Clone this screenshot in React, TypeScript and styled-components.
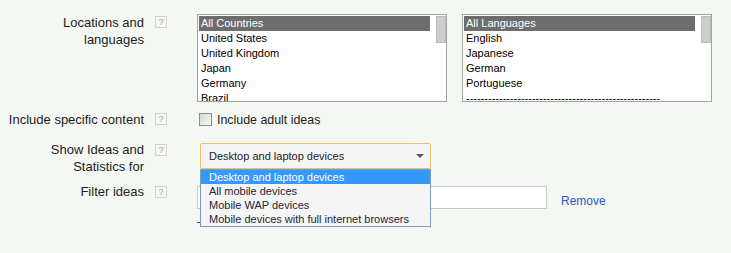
import React from "react";
import styled, { createGlobalStyle } from "styled-components";

const GlobalStyle = createGlobalStyle`
  html, body {
    margin: 0;
    padding: 0;
    background: #f4f8f3;
  }
  body {
    font-family: "Liberation Sans", Arial, sans-serif;
    color: #1c1c1c;
  }
`;

const Page = styled.div`
  width: 731px;
  height: 253px;
  padding-top: 14px;
  box-sizing: border-box;
  overflow: hidden;
`;

const Row = styled.div<{ $gap: number }>`
  display: grid;
  grid-template-columns: 145px 12px 1fr;
  column-gap: 10px;
  align-items: start;
  margin-top: ${(p) => p.$gap}px;
`;

const Label = styled.div`
  text-align: right;
  font-size: 13px;
  line-height: 17px;
  padding-right: 1px;
`;

const Help = styled.span<{ $top: number }>`
  display: flex;
  align-items: center;
  justify-content: center;
  width: 12px;
  height: 12px;
  box-sizing: border-box;
  margin-top: ${(p) => p.$top}px;
  border: 1px solid #d2d2d2;
  background: #f6f6f6;
  color: #a8a8a8;
  font-size: 9px;
  line-height: 1;
`;

const Field = styled.div`
  padding-left: 20px;
`;

const ListBoxes = styled.div`
  display: flex;
  gap: 15px;
`;

const ListBox = styled.div`
  display: flex;
  width: 250px;
  height: 88px;
  box-sizing: border-box;
  border: 1px solid #a3a3a3;
  background: #fff;
  padding: 1px 0 0 1px;
  overflow: hidden;
`;

const Items = styled.div`
  flex: 0 0 231px;
`;

const Item = styled.div<{ $selected?: boolean }>`
  height: 15px;
  line-height: 15px;
  font-size: 11px;
  padding-left: 2px;
  white-space: nowrap;
  overflow: hidden;
  color: ${(p) => (p.$selected ? "#fff" : "#000")};
  background: ${(p) => (p.$selected ? "#6d6d6d" : "transparent")};
`;

const ScrollTrack = styled.div`
  margin-left: 6px;
  width: 10px;
`;

const Thumb = styled.div`
  height: 27px;
  box-sizing: border-box;
  border: 1px solid #bdbdbd;
  background: #cdcdcd;
`;

const CheckRow = styled.label`
  display: flex;
  align-items: center;
  gap: 5px;
  height: 17px;
  margin-left: 2px;
  font-size: 12.4px;
`;

const Box = styled.span`
  width: 13px;
  height: 13px;
  box-sizing: border-box;
  border: 1px solid #8e8e8e;
  background: linear-gradient(135deg, #d8d8d8, #f7f7f7);
`;

const SelectWrap = styled.div`
  position: relative;
  width: 231px;
  margin: 2px 0 0 3px;
`;

const Select = styled.div`
  display: flex;
  align-items: center;
  justify-content: space-between;
  height: 26px;
  box-sizing: border-box;
  border: 1px solid #e6c370;
  border-radius: 2px;
  background: #f5f5f5;
  padding: 0 6px 0 8px;
  font-size: 11px;
`;

const Arrow = styled.span`
  width: 0;
  height: 0;
  border-left: 4px solid transparent;
  border-right: 4px solid transparent;
  border-top: 4px solid #5a5a5a;
`;

const Menu = styled.div`
  position: absolute;
  top: 26px;
  left: 0;
  z-index: 2;
  width: 231px;
  box-sizing: border-box;
  border: 1px solid #7f9db9;
  background: #f5f5f5;
`;

const Option = styled.div<{ $active?: boolean }>`
  height: 14px;
  line-height: 14px;
  padding-left: 8px;
  font-size: 11px;
  white-space: nowrap;
  color: ${(p) => (p.$active ? "#fff" : "#1e1e36")};
  background: ${(p) => (p.$active ? "#3399ff" : "transparent")};
`;

const FilterLine = styled.div`
  display: flex;
  align-items: flex-start;
  gap: 14px;
  margin-top: 3px;
`;

const TextInput = styled.div`
  width: 350px;
  height: 23px;
  box-sizing: border-box;
  border: 1px solid #c9c9c9;
  background: #fff;
`;

const RemoveLink = styled.a`
  margin-top: 8px;
  font-size: 12px;
  line-height: 14px;
  color: #2a56c8;
  cursor: pointer;
`;

/* underline of a link mostly hidden by the open menu */
const HiddenLinkEdge = styled.span`
  display: block;
  width: 40px;
  height: 13px;
  border-bottom: 1px solid #2a56c8;
`;

const countries = ["All Countries", "United States", "United Kingdom", "Japan", "Germany", "Brazil"];
const languages = ["All Languages", "English", "Japanese", "German", "Portuguese", "-".repeat(53)];
const devices = [
  "Desktop and laptop devices",
  "All mobile devices",
  "Mobile WAP devices",
  "Mobile devices with full internet browsers",
];

const List = ({ items }: { items: string[] }) => (
  <ListBox>
    <Items>
      {items.map((it, i) => (
        <Item key={it} $selected={i === 0}>
          {it}
        </Item>
      ))}
    </Items>
    <ScrollTrack>
      <Thumb />
    </ScrollTrack>
  </ListBox>
);

export default function App() {
  return (
    <>
      <GlobalStyle />
      <Page>
        <Row $gap={0}>
          <Label>
            Locations and
            <br />
            languages
          </Label>
          <Help $top={2}>?</Help>
          <Field>
            <ListBoxes>
              <List items={countries} />
              <List items={languages} />
            </ListBoxes>
          </Field>
        </Row>

        <Row $gap={9}>
          <Label>Include specific content</Label>
          <Help $top={2}>?</Help>
          <Field>
            <CheckRow>
              <Box />
              Include adult ideas
            </CheckRow>
          </Field>
        </Row>

        <Row $gap={13}>
          <Label>
            Show Ideas and
            <br />
            Statistics for
          </Label>
          <Help $top={3}>?</Help>
          <Field>
            <SelectWrap>
              <Select>
                {devices[0]}
                <Arrow />
              </Select>
              <Menu>
                {devices.map((d, i) => (
                  <Option key={d} $active={i === 0}>
                    {d}
                  </Option>
                ))}
              </Menu>
            </SelectWrap>
          </Field>
        </Row>

        <Row $gap={8}>
          <Label>Filter ideas</Label>
          <Help $top={3}>?</Help>
          <Field>
            <FilterLine>
              <TextInput />
              <RemoveLink>Remove</RemoveLink>
            </FilterLine>
            <HiddenLinkEdge />
          </Field>
        </Row>
      </Page>
    </>
  );
}
